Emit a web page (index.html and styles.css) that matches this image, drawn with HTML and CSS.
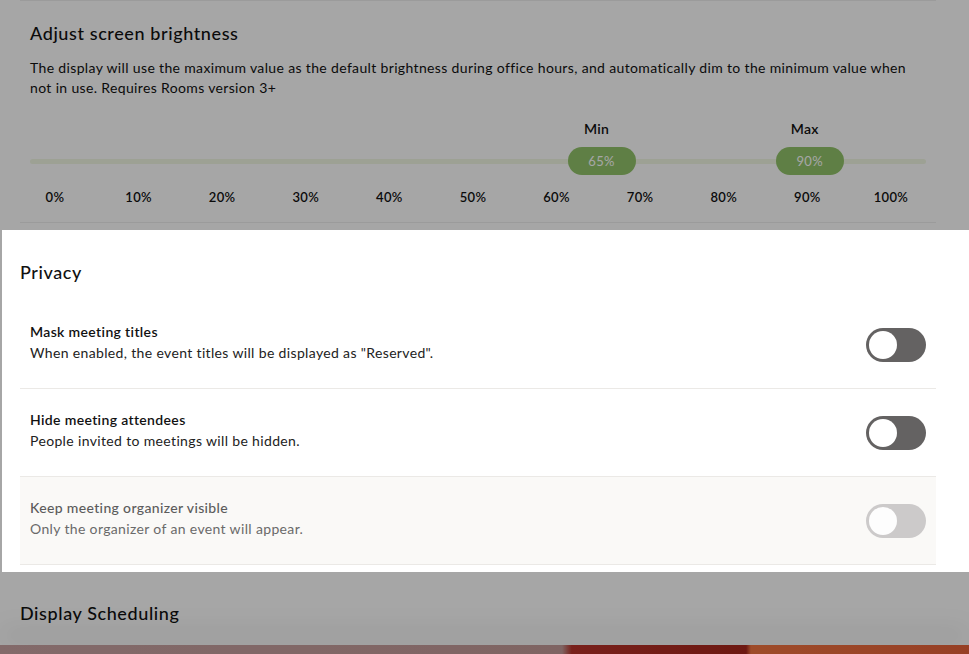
FILE: index.html
```html
<!DOCTYPE html>
<html lang="en">
<head>
	<meta charset="UTF-8">
	<title>Room settings</title>
	<link rel="stylesheet" href="styles.css">
</head>
<body>
	<div class="page">
		<div class="settings">
			<section class="block brightness">
				<h3>Adjust screen brightness</h3>
				<p class="hint">The display will use the maximum value as the default brightness during office hours, and automatically dim to the minimum value when not in use. Requires Rooms version 3+</p>
				<div class="range">
					<div class="range-names">
						<span style="left:65.5%">Min</span>
						<span style="left:90.4%">Max</span>
					</div>
					<div class="range-track">
						<div class="track"></div>
						<div class="thumbs">
							<span class="thumb" style="left:65.5%">65%</span>
							<span class="thumb" style="left:90.4%">90%</span>
						</div>
					</div>
					<div class="ticks">
						<span>0%</span><span>10%</span><span>20%</span><span>30%</span><span>40%</span><span>50%</span>
						<span>60%</span><span>70%</span><span>80%</span><span>90%</span><span>100%</span>
					</div>
				</div>
			</section>

			<!-- highlighted by the onboarding tour -->
			<section class="group spotlight">
				<h2>Privacy</h2>
				<div class="row">
					<div class="row-text">
						<h4>Mask meeting titles</h4>
						<p>When enabled, the event titles will be displayed as "Reserved".</p>
					</div>
					<span class="switch"></span>
				</div>
				<div class="row">
					<div class="row-text">
						<h4>Hide meeting attendees</h4>
						<p>People invited to meetings will be hidden.</p>
					</div>
					<span class="switch"></span>
				</div>
				<div class="row disabled">
					<div class="row-text">
						<h4>Keep meeting organizer visible</h4>
						<p>Only the organizer of an event will appear.</p>
					</div>
					<span class="switch"></span>
				</div>
			</section>

			<section class="group">
				<h2>Display Scheduling</h2>
			</section>
		</div>
		<div class="room-photo"></div>
	</div>
</body>
</html>
```

FILE: styles.css
```css
body,h2,h3,h4,p{margin:0;padding:0;}
html,body{height:100%;}
body{
	font-family: Lato, "Open Sans", sans-serif;
	color:#111;
	background:#fff;
	overflow:hidden;
	letter-spacing:0.35px;
}
.page{
	display:flex;
	flex-direction:column;
	height:100vh;
}
.settings{
	flex:1;
	padding:0 33px 0 20px;
}

/* brightness block */
.block{
	border-top:1px solid #eee;
	border-bottom:1px solid #eee;
	padding:20px 10px 17px;
}
.block h3{
	font-size:18px;
	line-height:24px;
	font-weight:500;
	letter-spacing:0.6px;
}
.hint{
	margin-top:13px;
	font-size:14px;
	line-height:20px;
}
.range{
	margin-top:21px;
	padding:0 35px 0 25px;
}
.range-names{
	position:relative;
	height:20px;
	font-size:14px;
	line-height:20px;
	font-weight:600;
}
/* labels sit a little left of the thumb centre */
.range-names span{
	position:absolute;
	top:0;
	transform:translateX(calc(-50% - 6px));
}
.range-track{
	position:relative;
	height:28px;
	margin:8px -35px 0 -25px;
}
.track{
	position:absolute;
	left:0;
	right:0;
	top:12px;
	height:5px;
	border-radius:3px;
	background:#f1f8e4;
}
.thumbs{
	position:absolute;
	top:0;
	bottom:0;
	left:25px;
	right:35px;
}
.thumb{
	position:absolute;
	top:0;
	width:68px;
	height:28px;
	border-radius:14px;
	background:#92c46a;
	color:#fff;
	font-size:13px;
	line-height:28px;
	text-align:center;
	transform:translateX(calc(-50% - 1px));
}
.ticks{
	display:flex;
	justify-content:space-between;
	margin-top:14px;
	font-size:13px;
	line-height:16px;
	font-weight:600;
}
.ticks span{
	width:0;
	display:flex;
	justify-content:center;
	white-space:nowrap;
}

/* setting groups */
.group h2{
	font-size:18px;
	line-height:24px;
	font-weight:500;
	letter-spacing:0.6px;
}
.spotlight{
	position:relative;
	z-index:1;
	margin:7px -33px 0 -18px;
	padding:30px 33px 7px 18px;
	background:#fff;
	box-shadow:0 0 0 2000px rgba(0,0,0,.35);
}
.spotlight h2{
	margin-bottom:17px;
}
.row{
	display:flex;
	align-items:center;
	justify-content:space-between;
	padding:20px 10px 25px;
	border-bottom:1px solid #ebe9e6;
}
.row h4{
	font-size:14px;
	line-height:21px;
	font-weight:600;
}
.row p{
	font-size:14px;
	line-height:21px;
	color:#222;
}
.switch{
	position:relative;
	width:60px;
	height:34px;
	margin-top:5px;
	border-radius:17px;
	background:#646262;
}
.switch::after{
	content:"";
	position:absolute;
	left:3px;
	top:3px;
	width:28px;
	height:28px;
	border-radius:50%;
	background:#fff;
}
.row.disabled{
	background:#faf9f7;
}
.row.disabled h4{
	color:#5c5c5c;
	font-weight:500;
}
.row.disabled p{
	color:#6a6a6a;
}
.row.disabled .switch{
	background:#cccaca;
}
.row.disabled .switch::after{
	background:#fdfdfd;
}
.group + .group{
	margin-top:29px;
}

.room-photo{
	height:9px;
	background:linear-gradient(90deg, #c9a3a3 0%, #c49a98 58%, #b9322a 59%, #a8261c 77%, #f37440 77.5%, #e8623a 100%);
	box-shadow:0 -14px 26px rgba(0,0,0,.12);
}
```
